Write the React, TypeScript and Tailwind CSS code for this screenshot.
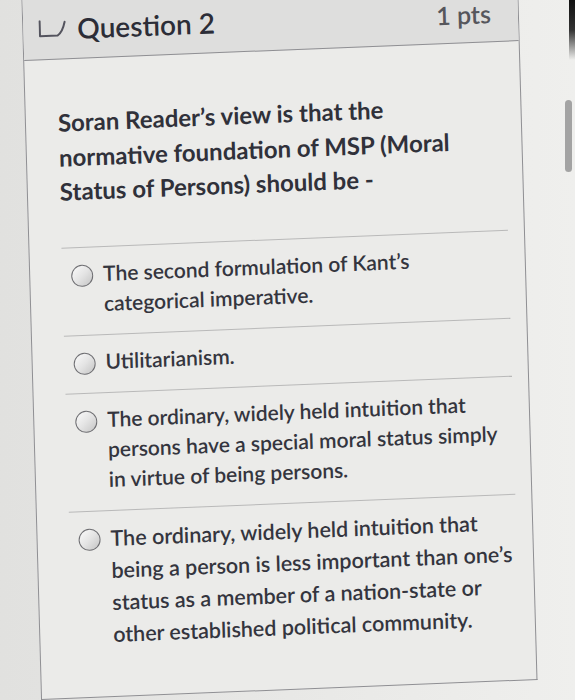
import React from 'react';

const answers: { lines: string[]; size: string; leading: string }[] = [
  { lines: ["The second formulation of Kant\u2019s", 'categorical imperative.'], size: 'text-[21px]', leading: 'leading-[30px]' },
  { lines: ['Utilitarianism.'], size: 'text-[21px]', leading: 'leading-[30px]' },
  {
    lines: [
      'The ordinary, widely held intuition that',
      'persons have a special moral status simply',
      'in virtue of being persons.',
    ],
    size: 'text-[21px]',
    leading: 'leading-[30px]',
  },
  {
    lines: [
      'The ordinary, widely held intuition that',
      'being a person is less important than one\u2019s',
      'status as a member of a nation-state or',
      'other established political community.',
    ],
    size: 'text-[21.5px]',
    leading: 'leading-[32px]',
  },
];

const FlagIcon: React.FC = () => (
  <svg width="28" height="18" viewBox="0 0 28 18" fill="none" className="shrink-0">
    <path d="M1.5 1 V16 H19 C22.5 14 25 9 26.5 2.5" stroke="#54545e" strokeWidth="2" strokeLinecap="round" strokeLinejoin="round" />
  </svg>
);

const Radio: React.FC = () => (
  <div className="mt-[6px] h-[22px] w-[22px] shrink-0 rounded-full border-[1.5px] border-[#6e6e72] bg-gradient-to-br from-[#fbfbfb] via-[#e4e4e4] to-[#c4c4c4]" />
);

export default function App() {
  return (
    <div className="relative h-[700px] w-[575px] overflow-hidden bg-gradient-to-r from-[#e1e1df] via-[#e8e8e6] to-[#efefed] font-['Lato','Open_Sans',sans-serif] text-[#2f3039]">
      <div className="ml-[31px] mt-[-10px] flex h-[700px] w-[497px] skew-x-[1.6deg] -skew-y-[2.3deg] flex-col border-x border-b border-[#8f8f93] bg-[#ebebe9]">
        <div className="flex h-[61px] shrink-0 items-center border-b border-[#8f8f93] bg-[#dededd] pl-[15px] pr-[27px]">
          <FlagIcon />
          <h2 className="ml-[11px] text-[28px] font-semibold leading-none text-[#2c2d37]">Question 2</h2>
          <span className="ml-auto mt-[4px] text-[25px] font-semibold leading-none text-[#56565c]">1 pts</span>
        </div>

        <p className="ml-[32px] mt-[46px] text-[24px] font-bold leading-[34.5px] text-[#30313a]">
          <span className="block">Soran Reader’s view is that the</span>
          <span className="block">normative foundation of MSP (Moral</span>
          <span className="block">Status of Persons) should be -</span>
        </p>

        <div className="mt-[38px]">
          {answers.map((a, i) => (
            <div
              key={i}
              className="ml-[32px] mr-[16px] flex gap-[10px] border-t border-[#b9b9b9] pb-[16px] pl-[9px] pt-[11px]"
            >
              <Radio />
              <div className={`font-semibold text-[#34353e] ${a.size} ${a.leading}`}>
                {a.lines.map((l) => (
                  <span key={l} className="block whitespace-nowrap">{l}</span>
                ))}
              </div>
            </div>
          ))}
        </div>
      </div>

      <div className="absolute right-0 top-0 h-[60px] w-[6px] bg-gradient-to-b from-[#111] via-[#333] to-transparent" />
      <div className="absolute right-[3px] top-[100px] h-[72px] w-[7px] rounded-full bg-[#a3a3a3]" />
    </div>
  );
}
